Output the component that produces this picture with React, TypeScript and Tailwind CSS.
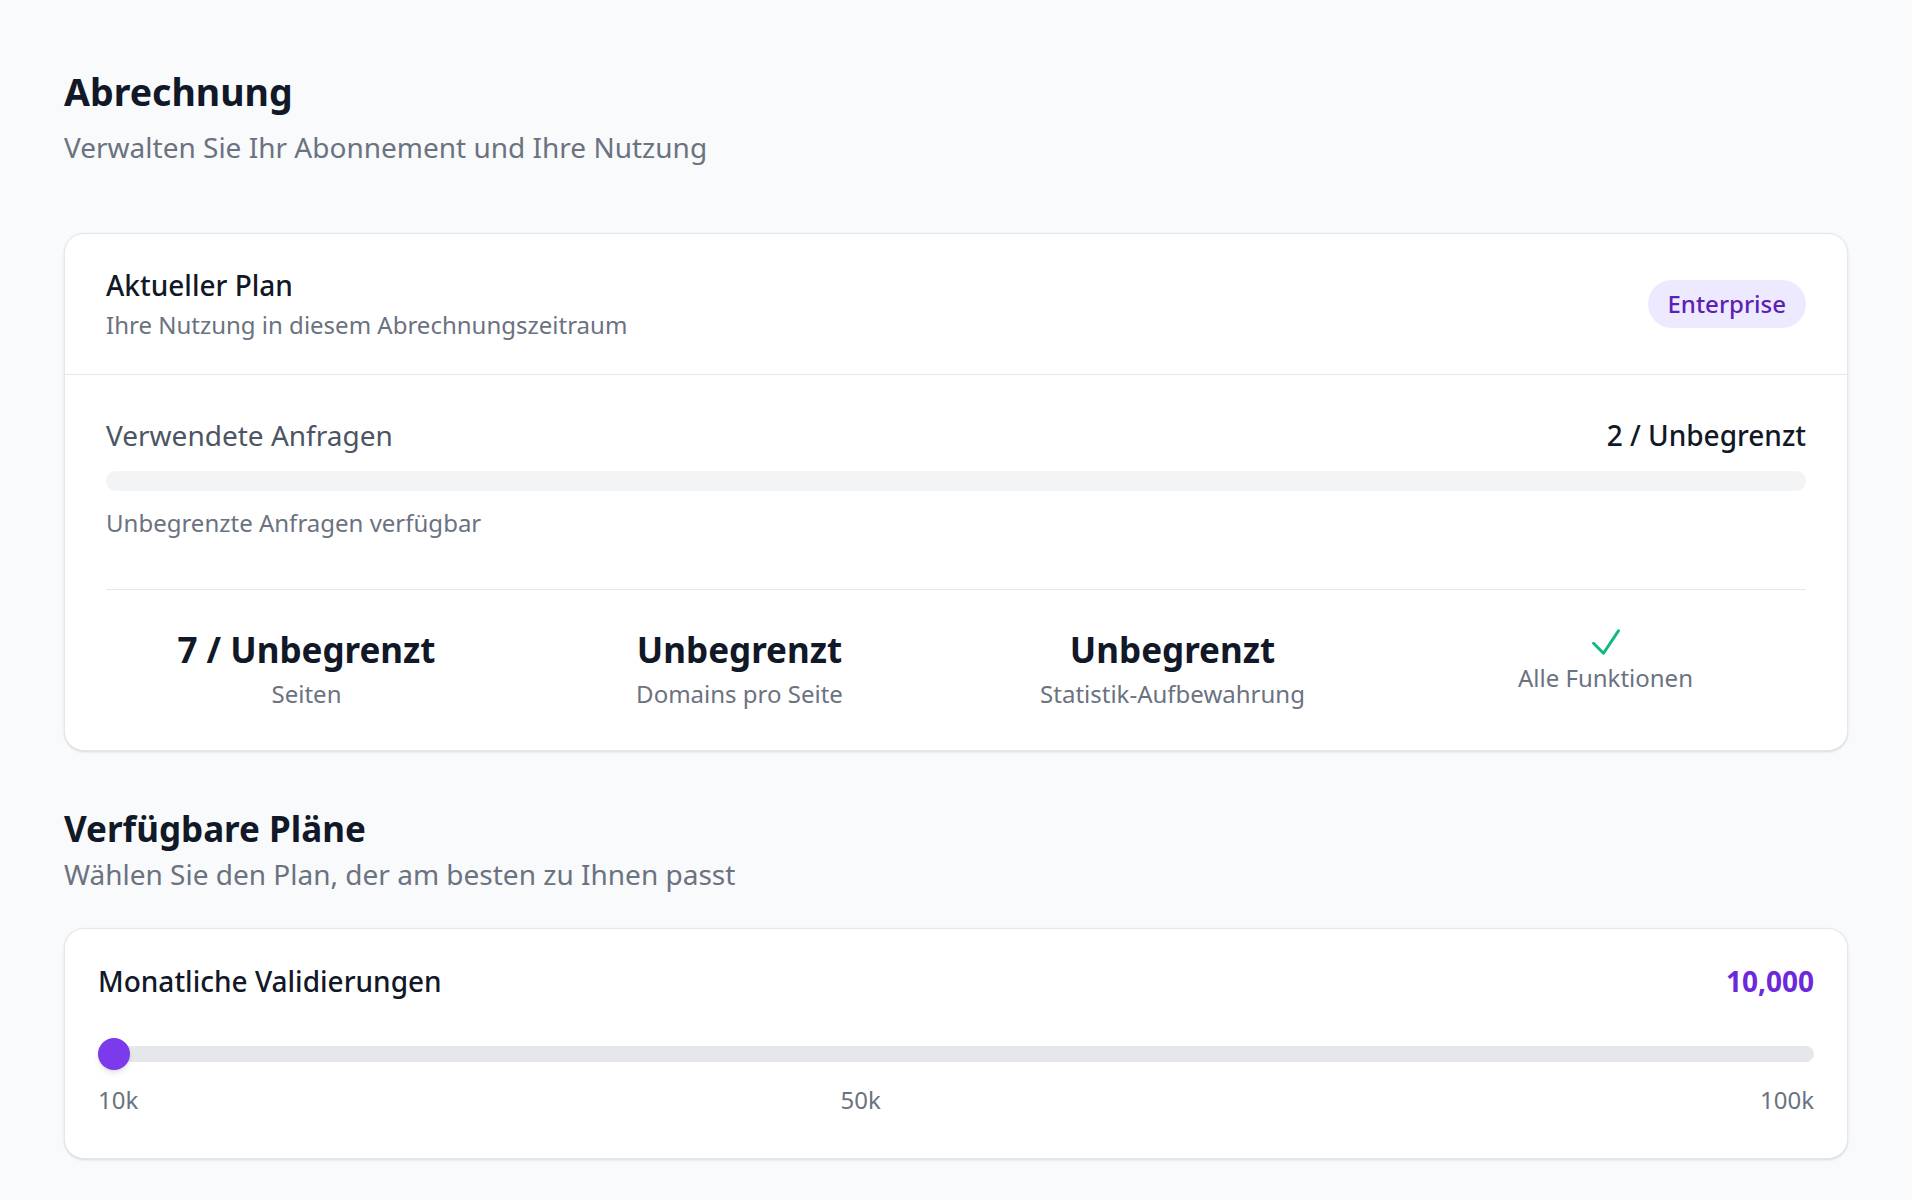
import React from 'react';

const stats = [
    { value: '7 / Unbegrenzt', label: 'Seiten' },
    { value: 'Unbegrenzt', label: 'Domains pro Seite' },
    { value: 'Unbegrenzt', label: 'Statistik-Aufbewahrung' },
];

function CheckIcon() {
    return (
        <svg viewBox="0 0 24 24" fill="none" stroke="currentColor" strokeWidth={1.8} strokeLinecap="round" strokeLinejoin="round" className="w-10 h-10 text-[#10b981]">
            <path d="m4.5 12.75 6 6 9-13.5" />
        </svg>
    );
}

export default function App() {
    return (
        <div className="min-h-screen bg-[#f9fafb] px-16 pt-16 pb-16 font-['Noto_Sans',sans-serif] text-[#111827]">
            <h1 className="text-[37.5px] leading-[56px] font-bold text-[#111827]">Abrechnung</h1>
            <p className="mt-[7px] text-[28px] leading-[40px] text-[#6b7280]">Verwalten Sie Ihr Abonnement und Ihre Nutzung</p>

            {/* current plan */}
            <div className="mt-[66px] bg-white border border-[#e5e7eb] rounded-[20px] shadow-sm">
                <div className="flex items-center justify-between px-[41px] py-[33px] border-b border-[#e5e7eb]">
                    <div>
                        <h3 className="text-[28px] leading-[36px] font-medium text-[#111827]">Aktueller Plan</h3>
                        <p className="mt-1.5 text-[24px] leading-[32px] text-[#6b7280]">Ihre Nutzung in diesem Abrechnungszeitraum</p>
                    </div>
                    <span className="px-5 py-2 rounded-full bg-[#ede9fe] text-[#5b21b6] text-[24px] leading-[32px] font-medium">Enterprise</span>
                </div>

                <div className="px-[41px] pt-10 pb-10">
                    <div className="flex items-center justify-between">
                        <span className="text-[28px] leading-[40px] text-[#4b5563]">Verwendete Anfragen</span>
                        <span className="text-[28px] leading-[40px] font-medium text-[#111827]">2 / Unbegrenzt</span>
                    </div>
                    <div className="mt-4 h-5 w-full rounded-full bg-[#f3f4f6]"></div>
                    <p className="mt-4 text-[24px] leading-[32px] text-[#6b7280]">Unbegrenzte Anfragen verfügbar</p>

                    <div className="mt-[50px] border-t border-[#e5e7eb] pt-8 grid grid-cols-4 gap-8">
                        {stats.map((s, i) => (
                            <div key={i} className="flex flex-col items-center text-center">
                                <div className="text-[35px] leading-[56px] font-bold text-[#111827]">{s.value}</div>
                                <div className="text-[24px] leading-[32px] text-[#6b7280]">{s.label}</div>
                            </div>
                        ))}
                        <div className="flex flex-col items-center text-center">
                            <CheckIcon />
                            <div className="text-[24px] leading-[32px] text-[#6b7280]">Alle Funktionen</div>
                        </div>
                    </div>
                </div>
            </div>

            {/* plans */}
            <h2 className="mt-14 text-[35px] leading-[44px] font-bold text-[#111827]">Verfügbare Pläne</h2>
            <p className="mt-[3px] text-[28px] leading-[40px] text-[#6b7280]">Wählen Sie den Plan, der am besten zu Ihnen passt</p>

            <div className="mt-[34px] bg-white border border-[#e5e7eb] rounded-[20px] shadow-sm pl-[33px] pr-[33px] pt-8 pb-10">
                <div className="flex items-center justify-between">
                    <span className="text-[28px] leading-[40px] font-medium text-[#111827]">Monatliche Validierungen</span>
                    <span className="text-[28px] leading-[40px] font-bold text-[#6d28d9]">10,000</span>
                </div>
                <div className="relative mt-[37px] h-8 flex items-center">
                    <div className="h-4 w-full rounded-full bg-[#e5e7eb]"></div>
                    <div className="absolute left-0 top-0 w-8 h-8 rounded-full bg-[#7c3aed] shadow-md"></div>
                </div>
                <div className="relative mt-3 flex justify-between text-[24px] leading-[36px] text-[#6b7280]">
                    <span>10k</span>
                    <span className="absolute left-[44.444%] -translate-x-1/2">50k</span>
                    <span>100k</span>
                </div>
            </div>
        </div>
    );
}
